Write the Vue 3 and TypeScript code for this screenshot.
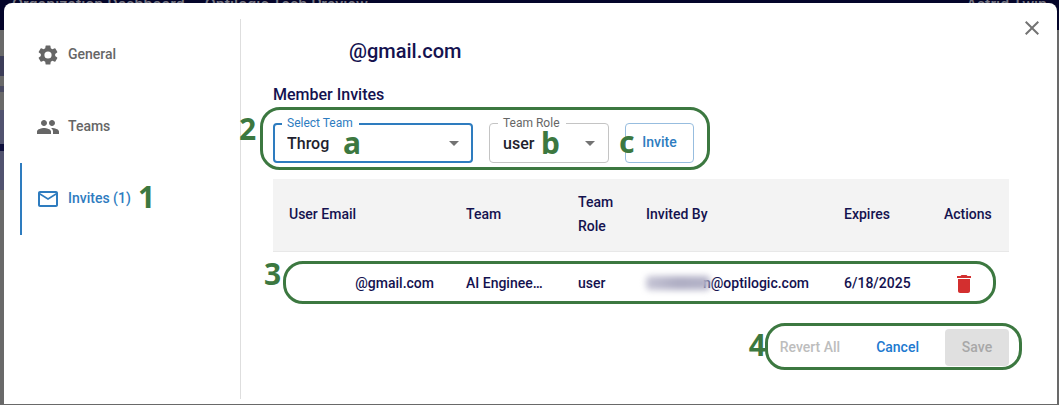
<script setup lang="ts">
import { ref } from 'vue'

interface Invite {
  email: string
  team: string
  role: string
  inviter: string
  expires: string
}

const tabs = [
  { id: 'general', label: 'General', icon: 'M19.14 12.94c.04-.3.06-.61.06-.94s-.02-.64-.07-.94l2.03-1.58a.49.49 0 0 0 .12-.61l-1.92-3.32a.49.49 0 0 0-.59-.22l-2.39.96a7 7 0 0 0-1.62-.94l-.36-2.54a.48.48 0 0 0-.48-.41h-3.84a.47.47 0 0 0-.47.41l-.36 2.54c-.59.24-1.13.57-1.62.94l-2.39-.96a.47.47 0 0 0-.59.22L2.74 8.87a.47.47 0 0 0 .12.61l2.03 1.58c-.05.3-.09.63-.09.94s.02.64.07.94l-2.03 1.58a.49.49 0 0 0-.12.61l1.92 3.32c.12.22.37.29.59.22l2.39-.96c.5.38 1.03.7 1.62.94l.36 2.54c.05.24.24.41.48.41h3.84c.24 0 .44-.17.47-.41l.36-2.54a7 7 0 0 0 1.62-.94l2.39.96c.22.08.47 0 .59-.22l1.92-3.32a.47.47 0 0 0-.12-.61l-2.01-1.58zM12 15.6a3.6 3.6 0 1 1 0-7.2 3.6 3.6 0 0 1 0 7.2z' },
  { id: 'teams', label: 'Teams', icon: 'M16 11c1.66 0 2.99-1.34 2.99-3S17.66 5 16 5s-3 1.34-3 3 1.34 3 3 3zm-8 0c1.66 0 2.99-1.34 2.99-3S9.66 5 8 5 5 6.34 5 8s1.34 3 3 3zm0 2c-2.33 0-7 1.17-7 3.5V19h14v-2.5c0-2.33-4.67-3.5-7-3.5zm8 0c-.29 0-.62.02-.97.05 1.16.84 1.97 1.97 1.97 3.45V19h6v-2.5c0-2.33-4.67-3.5-7-3.5z' },
  { id: 'invites', label: 'Invites (1)', icon: 'M22 6c0-1.1-.9-2-2-2H4c-1.1 0-2 .9-2 2v12c0 1.100.9 2 2 2h16c1.100 0 2-.9 2-2V6zm-2 0-8 5-8-5h16zm0 12H4V8l8 5 8-5v10z' }
]

const active = ref('invites')
const team = ref('Throg')
const role = ref('user')
const invites = ref<Invite[]>([
  { email: '@gmail.com', team: 'AI Engineering', role: 'user', inviter: 'n@optilogic.com', expires: '6/18/2025' }
])
</script>

<template>
  <div class="page">
    <header class="topbar">
      <span class="crumb">Organization Dashboard</span>
      <span class="crumb">Optilogic Tech Preview</span>
      <span class="account">Astrid Twin</span>
    </header>
    <div class="rail"></div>

    <section class="dialog" role="dialog" aria-label="Member Invites">
      <nav class="side">
        <button
          v-for="tab in tabs"
          :key="tab.id"
          type="button"
          class="tab"
          :class="{ active: active === tab.id }"
          @click="active = tab.id"
        >
          <svg viewBox="0 0 24 24" aria-hidden="true"><path :d="tab.icon" /></svg>
          <span>{{ tab.label }}</span>
          <b v-if="tab.id === 'invites'" class="mark mark-1">1</b>
        </button>
      </nav>

      <button type="button" class="close" aria-label="Close">
        <svg viewBox="0 0 24 24" aria-hidden="true"><path d="M19 6.410 17.590 5 12 10.590 6.410 5 5 6.410 10.590 12 5 17.590 6.410 19 12 13.410 17.590 19 19 17.590 13.410 12z" /></svg>
      </button>

      <main class="content">
        <h1>@gmail.com</h1>
        <h2>Member Invites</h2>

        <form class="invite" @submit.prevent>
          <div class="field team focused">
            <label for="team">Select Team</label>
            <select id="team" v-model="team">
              <option>Throg</option>
              <option>AI Engineering</option>
            </select>
            <svg class="arrow" viewBox="0 0 24 24" aria-hidden="true"><path d="m7 10 5 5 5-5z" /></svg>
            <b class="mark mark-a">a</b>
          </div>
          <div class="field role">
            <label for="role">Team Role</label>
            <select id="role" v-model="role">
              <option>user</option>
              <option>admin</option>
            </select>
            <svg class="arrow" viewBox="0 0 24 24" aria-hidden="true"><path d="m7 10 5 5 5-5z" /></svg>
            <b class="mark mark-b">b</b>
          </div>
          <button type="submit" class="send">Invite<b class="mark mark-c">c</b></button>
          <i class="ring ring-2"></i>
          <b class="mark mark-2">2</b>
        </form>

        <div class="list">
          <table>
            <colgroup>
              <col class="c-email" /><col class="c-team" /><col class="c-role" />
              <col class="c-by" /><col class="c-exp" /><col class="c-act" />
            </colgroup>
            <thead>
              <tr>
                <th>User Email</th><th>Team</th><th>Team Role</th>
                <th>Invited By</th><th>Expires</th><th>Actions</th>
              </tr>
            </thead>
            <tbody>
              <tr v-for="row in invites" :key="row.email">
                <td class="email">{{ row.email }}</td>
                <td class="clip">{{ row.team }}</td>
                <td>{{ row.role }}</td>
                <td><div class="by"><i class="smudge"></i><span>{{ row.inviter }}</span></div></td>
                <td>{{ row.expires }}</td>
                <td class="act">
                  <button type="button" class="remove" aria-label="Delete invite">
                    <svg viewBox="0 0 24 24" aria-hidden="true"><path d="M6 19c0 1.100.9 2 2 2h8c1.100 0 2-.9 2-2V7H6v12zM19 4h-3.500l-1-1h-5l-1 1H5v2h14V4z" /></svg>
                  </button>
                </td>
              </tr>
            </tbody>
          </table>
          <i class="ring ring-3"></i>
          <b class="mark mark-3">3</b>
        </div>

        <footer class="actions">
          <button type="button" class="text" disabled>Revert All</button>
          <button type="button" class="text primary">Cancel</button>
          <button type="button" class="save" disabled>Save</button>
          <i class="ring ring-4"></i>
          <b class="mark mark-4">4</b>
        </footer>
      </main>
    </section>
  </div>
</template>

<style>
body {
  margin: 0;
  overflow: hidden;
}
</style>

<style scoped>
* {
  box-sizing: border-box;
}

.page {
  position: relative;
  min-height: 100vh;
  background: #696969;
  color: #14124f;
  font: 500 14px/24px Roboto, "Liberation Sans", sans-serif;
  overflow: hidden;
}

.topbar {
  display: flex;
  gap: 20px;
  height: 30px;
  padding: 0 12px;
  background: #04052a;
  color: #777783;
  font-size: 16px;
  line-height: 10px;
}

.account {
  margin-left: auto;
}

.rail {
  width: 4px;
  height: 134px;
  margin-top: 26px;
  background: linear-gradient(#3c3d58 0 20px, #696969 20px 30px, #4a4b62 30px 36px, #696969 36px 54px, #51536f 54px 88px, #0e0f3c 88px 95px, #51536f 95px);
}

.dialog {
  position: absolute;
  inset: 3px 2px 1px 4px;
  display: flex;
  border-radius: 8px 8px 0 0;
  background: #fff;
}

button,
select {
  border: 0;
  background: none;
  font: inherit;
  color: inherit;
}

svg {
  fill: currentColor;
}

.side {
  flex: 0 0 237px;
  display: flex;
  flex-direction: column;
  margin: 16px 0 5px;
  padding-left: 16px;
  border-right: 1px solid #dedede;
}

.tab {
  position: relative;
  display: flex;
  flex-shrink: 0;
  align-items: center;
  gap: 8px;
  width: 160px;
  height: 72px;
  padding: 0 0 0 14px;
  border-left: 2px solid transparent;
  color: #666;
}

.tab span {
  padding-bottom: 2px;
}

.tab svg {
  width: 24px;
  height: 24px;
}

.tab.active {
  border-color: #2e7cbf;
  color: #2e7cbf;
}

.close {
  position: absolute;
  top: 13px;
  right: 13px;
  width: 24px;
  height: 24px;
  padding: 0;
  color: #737373;
}

.close svg {
  width: 24px;
  height: 24px;
}

.content {
  flex: 1;
  min-width: 0;
  padding: 32px 48px 0 32px;
}

h1 {
  margin: 0 0 16px;
  padding-left: 76px;
  font-size: 20px;
  font-weight: 500;
  line-height: 32px;
}

h2 {
  margin: 0;
  font-size: 16px;
  font-weight: 500;
  line-height: 24px;
}

.invite {
  position: relative;
  display: flex;
  gap: 16px;
  margin: 16px 0;
}

.field {
  position: relative;
  height: 40px;
  border: 1px solid #c4c4c4;
  border-radius: 4px;
}

.field.team {
  width: 200px;
}

.field.role {
  width: 120px;
}

.field.focused {
  border: 2px solid #2e7cbf;
}

.field label {
  position: absolute;
  top: -8px;
  left: 8px;
  padding: 0 6px 0 5px;
  background: #fff;
  color: #666;
  font-size: 12px;
  font-weight: 400;
  line-height: 14px;
}

.focused label {
  top: -9px;
  left: 7px;
  color: #2e7cbf;
}

.field select {
  appearance: none;
  width: 100%;
  height: 100%;
  padding: 2px 32px 0 12px;
  color: #1f1f2e;
  font-size: 16px;
  outline: none;
}

.role select {
  padding-left: 13px;
}

.arrow {
  position: absolute;
  top: 50%;
  right: 6px;
  width: 24px;
  height: 24px;
  margin-top: -12px;
  color: #737373;
  pointer-events: none;
}

.focused .arrow {
  right: 5px;
}

.send {
  position: relative;
  width: 69px;
  height: 40px;
  padding: 0 0 2px;
  border: 1px solid #97bddf;
  border-radius: 4px;
  color: #2e7cbf;
}

.list {
  position: relative;
}

table {
  width: 100%;
  border-collapse: collapse;
  table-layout: fixed;
}

.c-email {
  width: 177px;
}

.c-team {
  width: 112px;
}

.c-role {
  width: 68px;
}

.c-exp {
  width: 100px;
}

.c-act {
  width: 81px;
}

th {
  height: 72px;
  padding: 0 16px 2px;
  border-bottom: 1px solid #e8e8e8;
  background: #f3f3f3;
  font-weight: 500;
  text-align: left;
}

th:last-child {
  padding-right: 0;
}

td {
  height: 63px;
  padding: 0 16px;
  white-space: nowrap;
}

.email {
  text-align: right;
}

.clip {
  overflow: hidden;
  text-overflow: ellipsis;
}

.by {
  display: flex;
  align-items: center;
}

.smudge {
  position: relative;
  z-index: 1;
  flex-shrink: 0;
  width: 64px;
  height: 14px;
  margin-right: -7px;
  border-radius: 4px;
  background: linear-gradient(90deg, #c6c5d5, #aeadc3 50%, #b4b3c8);
  filter: blur(3px);
}

td.act {
  padding: 0 0 0 22px;
}

.remove {
  display: flex;
  padding: 2px 0 0 2px;
  color: #d32f2f;
}

.remove svg {
  width: 24px;
  height: 24px;
}

.actions {
  position: relative;
  display: flex;
  justify-content: flex-end;
  gap: 16px;
  margin-top: 15px;
}

.actions button {
  height: 37px;
  padding: 0 10px 2px;
  border-radius: 4px;
}

.actions .text {
  color: #bdbdbd;
}

.actions .primary {
  color: #2079cf;
}

.actions .save {
  width: 64px;
  background: #e0e0e0;
  color: #a8a8a8;
}

.ring {
  position: absolute;
  border: 3px solid #3c7840;
  border-radius: 20px;
  pointer-events: none;
}

.ring-2 {
  top: -16px;
  left: -13px;
  width: 450px;
  height: 63px;
}

.ring-3 {
  top: 82px;
  left: 10px;
  right: 13px;
  height: 43px;
}

.ring-4 {
  top: -6px;
  right: -13px;
  width: 257px;
  height: 47px;
}

.mark {
  position: absolute;
  color: #3c7840;
  font: 700 30px/32px "Noto Sans", "Open Sans", sans-serif;
  pointer-events: none;
}

.mark-1 {
  top: 18px;
  left: 116px;
}

.mark-2 {
  top: -10px;
  left: -34px;
}

.mark-3 {
  top: 79px;
  left: -9px;
}

.mark-4 {
  top: 0;
  right: 243px;
}

.mark-a {
  top: 2px;
  left: 68px;
}

.mark-b {
  top: 3px;
  left: 51px;
}

.mark-c {
  top: 2px;
  left: -7px;
}
</style>
